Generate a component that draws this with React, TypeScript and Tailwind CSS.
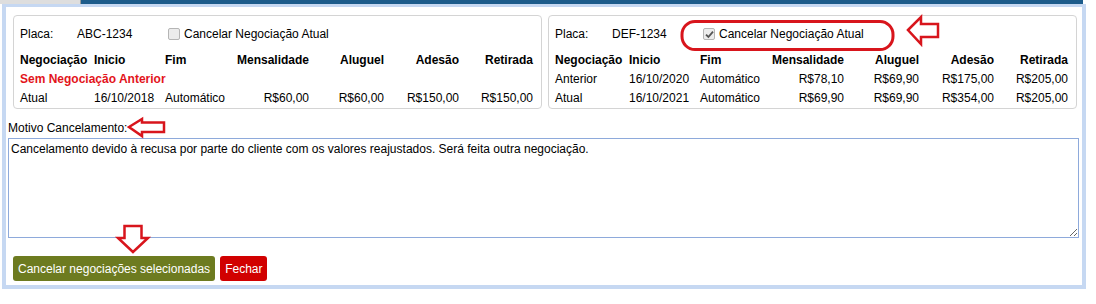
import React from "react"

interface Linha {
    negociacao: string
    inicio: string
    fim: string
    mensalidade: string
    aluguel: string
    adesao: string
    retirada: string
}

interface PainelProps {
    placa: string
    marcado: boolean
    linhas: Linha[]
    semAnterior?: boolean
}

const colunas = "grid grid-cols-[74px_71px_69px_75px_75px_75px_74px] h-[19px] items-center"

const Checkbox = ({ marcado }: { marcado: boolean }) => (
    <span className="w-[12px] h-[12px] border border-[#b5b5b5] rounded-[2px] bg-[#ececec] flex items-center justify-center">
        {marcado && (
            <svg width="9" height="9" viewBox="0 0 9 9">
                <path d="M1 4.6 L3.4 7 L8 1.6" fill="none" stroke="#555" strokeWidth="1.8" />
            </svg>
        )}
    </span>
)

const Painel = ({ placa, marcado, linhas, semAnterior }: PainelProps) => {
    return (
        <div className="w-[529px] h-[94px] border border-[#d4d4d4] rounded-[4px] pl-[6px] pt-[9px]">
            <div className="flex items-center h-[18px]">
                <span className="w-[57px]">Placa:</span>
                <span className="w-[91px]">{placa}</span>
                <Checkbox marcado={marcado} />
                <span className="ml-[4px]">Cancelar Negociação Atual</span>
            </div>
            <div className="mt-[7px]">
                <div className={`${colunas} font-bold`}>
                    <span>Negociação</span>
                    <span>Inicio</span>
                    <span>Fim</span>
                    <span className="text-right">Mensalidade</span>
                    <span className="text-right">Aluguel</span>
                    <span className="text-right">Adesão</span>
                    <span className="text-right">Retirada</span>
                </div>
                {semAnterior && (
                    <div className="h-[19px] flex items-center font-bold text-[#e3141b]">Sem Negociação Anterior</div>
                )}
                {linhas.map((l) => (
                    <div key={l.negociacao} className={colunas}>
                        <span>{l.negociacao}</span>
                        <span>{l.inicio}</span>
                        <span>{l.fim}</span>
                        <span className="text-right">{l.mensalidade}</span>
                        <span className="text-right">{l.aluguel}</span>
                        <span className="text-right">{l.adesao}</span>
                        <span className="text-right">{l.retirada}</span>
                    </div>
                ))}
            </div>
        </div>
    )
}

export default function App() {
    return (
        <div className="w-[1096px] h-[304px] bg-white relative overflow-hidden font-['Liberation_Sans',Arial,sans-serif] text-[12px] text-black">
            <div className="flex h-[4px]">
                <div className="w-[81px] bg-[#dedede] border-r border-[#9a9a9a]" />
                <div className="w-[1002px] bg-[#1d5c8b]" />
            </div>
            <div className="ml-[2px] w-[1084px] h-[285px] border-x-[4px] border-t-[3px] border-b-[4px] border-[#c6d8f2] bg-white">
                <div className="flex gap-[6px] pl-[7px] pt-[8px]">
                    <Painel
                        placa="ABC-1234"
                        marcado={false}
                        semAnterior
                        linhas={[
                            { negociacao: "Atual", inicio: "16/10/2018", fim: "Automático", mensalidade: "R$60,00", aluguel: "R$60,00", adesao: "R$150,00", retirada: "R$150,00" },
                        ]}
                    />
                    <Painel
                        placa="DEF-1234"
                        marcado
                        linhas={[
                            { negociacao: "Anterior", inicio: "16/10/2020", fim: "Automático", mensalidade: "R$78,10", aluguel: "R$69,90", adesao: "R$175,00", retirada: "R$205,00" },
                            { negociacao: "Atual", inicio: "16/10/2021", fim: "Automático", mensalidade: "R$69,90", aluguel: "R$69,90", adesao: "R$354,00", retirada: "R$205,00" },
                        ]}
                    />
                </div>
                <div className="pl-[2px] pr-[3px]">
                    <p className="mt-[10px] h-[19px] leading-[19px]">Motivo Cancelamento:</p>
                    <textarea
                        readOnly
                        className="block w-full h-[100px] border border-[#8eaadb] px-[2px] pt-[3px] text-[12px] leading-[15px] outline-none"
                        defaultValue="Cancelamento devido à recusa por parte do cliente com os valores reajustados. Será feita outra negociação."
                    />
                    <div className="flex gap-[5px] pl-[5px] mt-[18px]">
                        <button type="button" className="h-[25px] px-[5px] rounded-[3px] bg-[#6d7b20] text-white">
                            Cancelar negociações selecionadas
                        </button>
                        <button type="button" className="h-[25px] px-[5px] rounded-[3px] bg-[#d10000] text-white">
                            Fechar
                        </button>
                    </div>
                </div>
            </div>

            {/* anotações em vermelho */}
            <svg className="absolute left-0 top-0 pointer-events-none" width="1096" height="304">
                <rect x="682" y="21.5" width="211" height="28" rx="13" fill="none" stroke="#d8151c" strokeWidth="3" />
                <polygon points="908,30 921,17 921,24 938,24 938,37 921,37 921,44" fill="white" stroke="#d8151c" strokeWidth="2.5" strokeLinejoin="miter" />
                <polygon points="129,127 142,119 142,122.5 164,122.5 164,132 142,132 142,136" fill="white" stroke="#d8151c" strokeWidth="2.5" />
                <polygon points="133,252 118,238 124.5,238 124.5,226 141.5,226 141.5,238 148,238" fill="white" stroke="#d8151c" strokeWidth="2.5" />
            </svg>
        </div>
    )
}
